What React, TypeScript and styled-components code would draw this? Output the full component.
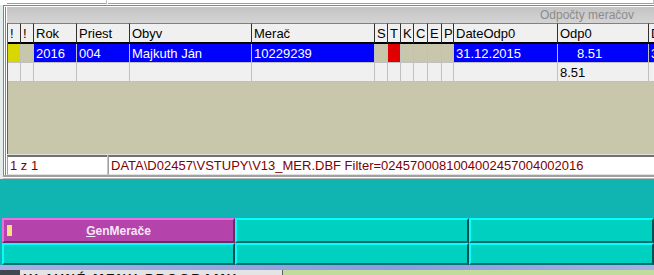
import React from "react";
import styled, { createGlobalStyle } from "styled-components";

const Global = createGlobalStyle`
  html, body { margin: 0; padding: 0; background: #e4ecec; overflow: hidden; }
  body { font-family: "Liberation Sans", Arial, sans-serif; font-size: 12px; }
`;

const Screen = styled.div`
  width: 654px;
  height: 275px;
  overflow: hidden;
  display: flex;
  flex-direction: column;
  background: #e4ecec;
  & > * { flex-shrink: 0; }
`;

const TopStrip = styled.div`
  height: 4px;
  display: flex;
  padding-left: 7px;
  gap: 1px;
  background: #ffffff;
  border-bottom: 1px solid #ffffff;
`;

const TopField = styled.div<{ $w?: number }>`
  ${(p) => (p.$w ? `width: ${p.$w}px;` : "flex: 1;")}
  background: #ffffff;
  border-bottom: 1px solid #a0a0a0;
  border-right: 1px solid #c8c8c8;
`;

const Panel = styled.div`
  margin-left: 3px;
  border-left: 1px solid #20b0b0;
  border-top: 1px solid #20b0b0;
  background: #ffffff;
  padding-top: 1px;
  display: flex;
  flex-direction: column;
  height: 174px;
  box-sizing: border-box;
`;

const Frame = styled.div`
  margin-left: 1px;
  border-left: 1px solid #20b0b0;
  padding-left: 1px;
  display: flex;
  flex-direction: column;
  flex: 1;
  min-height: 0;
  width: 700px;
`;

const TitleBar = styled.div`
  height: 16px;
  flex-shrink: 0;
  background: linear-gradient(#c4c4c4, #d4d4d4);
  color: #8c8c8c;
  display: flex;
  align-items: center;
  padding-left: 533px;
  font-size: 12px;
`;

const COLS = "13px 13px 43px 53px 122px 123px 13px 13px 13px 14px 14px 12px 104px 91px 60px";

const Grid = styled.div`
  display: grid;
  grid-template-columns: ${COLS};
  border-left: 1px solid #606060;
  background: #c9c7ab;
  flex: 1;
  min-height: 0;
  align-content: start;
`;

const Head = styled.div`
  height: 18px;
  background: #f0f0f0;
  border-top: 1px solid #808080;
  border-right: 1px solid #303030;
  border-bottom: 2px solid #000000;
  padding-left: 2px;
  display: flex;
  align-items: center;
  color: #000;
  white-space: nowrap;
  overflow: hidden;
  font-size: 13px;
`;

const Cell = styled.div<{ $bg?: string; $fg?: string; $pl?: number }>`
  height: 18px;
  background: ${(p) => p.$bg || "#f0f0f0"};
  color: ${(p) => p.$fg || "#000"};
  border-right: 1px solid #c0c0c0;
  border-bottom: 1px solid #c0c0c0;
  padding-left: ${(p) => p.$pl ?? 2}px;
  display: flex;
  align-items: center;
  white-space: nowrap;
  overflow: hidden;
  font-size: 13px;
`;

const StatusRow = styled.div`
  display: flex;
  flex-shrink: 0;
  gap: 1px;
  background: #c9c7ab;
  border-top: 1px solid #e0e0e0;
`;

const StatusField = styled.div<{ $w?: number }>`
  ${(p) => (p.$w ? `width: ${p.$w}px;` : "flex: 1;")}
  height: 17px;
  background: #ffffff;
  border-top: 2px solid #707070;
  border-left: 1px solid #a0a0a0;
  border-bottom: 1px solid #e0e0e0;
  color: #800000;
  padding-left: 2px;
  display: flex;
  align-items: center;
  white-space: nowrap;
  font-size: 13px;
`;

const PanelBottom = styled.div`
  height: 4px;
  flex-shrink: 0;
  margin-left: -4px;
  border-top: 2px solid #a0a0a0;
  border-bottom: 1px solid #b8b8b8;
  background: #ffffff;
  box-sizing: border-box;
`;

const TealArea = styled.div`
  height: 39px;
  background: #10b4b0;
`;

const ButtonRow = styled.div<{ $h: number }>`
  display: grid;
  grid-template-columns: 233px 234px 1fr;
  height: ${(p) => p.$h}px;
  padding-left: 2px;
  background: #10b4b0;
`;

const Btn = styled.div<{ $active?: boolean }>`
  position: relative;
  box-sizing: border-box;
  background: ${(p) => (p.$active ? "#b444ac" : "#00d0c0")};
  border-top: 2px solid ${(p) => (p.$active ? "#e870e4" : "#00ffff")};
  border-left: 2px solid ${(p) => (p.$active ? "#e870e4" : "#00ffff")};
  border-bottom: 2px solid ${(p) => (p.$active ? "#6a2a64" : "#007070")};
  border-right: 2px solid ${(p) => (p.$active ? "#6a2a64" : "#005050")};
  display: flex;
  align-items: center;
  justify-content: center;
  color: #f6e6f6;
  font-weight: bold;
  font-size: 12px;
`;

const Marker = styled.span`
  position: absolute;
  left: 3px;
  top: 5px;
  width: 5px;
  height: 11px;
  background: #f8e080;
`;

const U = styled.span`
  text-decoration: underline;
`;

const BlueStrip = styled.div`
  height: 5px;
  background: linear-gradient(90deg, #a8b0e4, #8c9ce0 60%, #a8b0e4);
`;

const Taskbar = styled.div`
  flex: 1;
  display: grid;
  grid-template-columns: 20px 263px 1fr;
  overflow: hidden;
`;

const TaskDark = styled.div`
  background: #404850;
`;

const TaskText = styled.div`
  background: #e4e4e4;
  border-right: 1px solid #606060;
  font-weight: bold;
  font-size: 13px;
  line-height: 16px;
  letter-spacing: 2px;
  padding-top: 1px;
  padding-left: 3px;
  color: #111;
  white-space: nowrap;
  overflow: hidden;
`;

const TaskGreen = styled.div`
  background: #c0dc9c;
`;

type C = { t?: string; bg?: string; fg?: string; pl?: number };

const heads = ["!", "!", "Rok", "Priest", "Obyv", "Merač", "S", "T", "K", "C", "E", "P", "DateOdp0", "Odp0", "DateOdp1"];

const B = "#0000ff";
const G = "#c9c7ab";
const W = "#ffffff";

const row1: C[] = [
  { bg: "#d8d800" },
  { bg: G },
  { t: "2016", bg: B, fg: W },
  { t: "004", bg: B, fg: W },
  { t: "Majkuth Ján", bg: B, fg: W },
  { t: "10229239", bg: B, fg: W },
  { bg: G },
  { bg: "#e00000" },
  { bg: G },
  { bg: G },
  { bg: G },
  { bg: G },
  { t: "31.12.2015", bg: B, fg: W },
  { t: "8.51", bg: B, fg: W, pl: 19 },
  { t: "31.12.2016", bg: B, fg: W },
];

const row2: C[] = heads.map((_, i) => (i === 13 ? { t: "8.51" } : {}));

export default function App() {
  return (
    <Screen>
      <Global />
      <TopStrip>
        <TopField $w={99} />
        <TopField />
      </TopStrip>
      <Panel>
        <Frame>
          <TitleBar>Odpočty meračov</TitleBar>
          <Grid>
            {heads.map((h, i) => (
              <Head key={"h" + i}>{h}</Head>
            ))}
            {row1.map((c, i) => (
              <Cell key={"a" + i} $bg={c.bg} $fg={c.fg} $pl={c.pl}>
                {c.t}
              </Cell>
            ))}
            {row2.map((c, i) => (
              <Cell key={"b" + i}>{c.t}</Cell>
            ))}
          </Grid>
          <StatusRow>
            <StatusField $w={97}>1 z 1</StatusField>
            <StatusField>{"DATA\\D02457\\VSTUPY\\V13_MER.DBF Filter=0245700081004002457004002016"}</StatusField>
          </StatusRow>
          <PanelBottom />
        </Frame>
      </Panel>
      <TealArea />
      <ButtonRow $h={25}>
        <Btn $active>
          <Marker />
          <span>
            <U>G</U>enMerače
          </span>
        </Btn>
        <Btn />
        <Btn />
      </ButtonRow>
      <ButtonRow $h={22}>
        <Btn />
        <Btn />
        <Btn />
      </ButtonRow>
      <BlueStrip />
      <Taskbar>
        <TaskDark />
        <TaskText>HLAVNÉ MENU PROGRAMU</TaskText>
        <TaskGreen />
      </Taskbar>
    </Screen>
  );
}
